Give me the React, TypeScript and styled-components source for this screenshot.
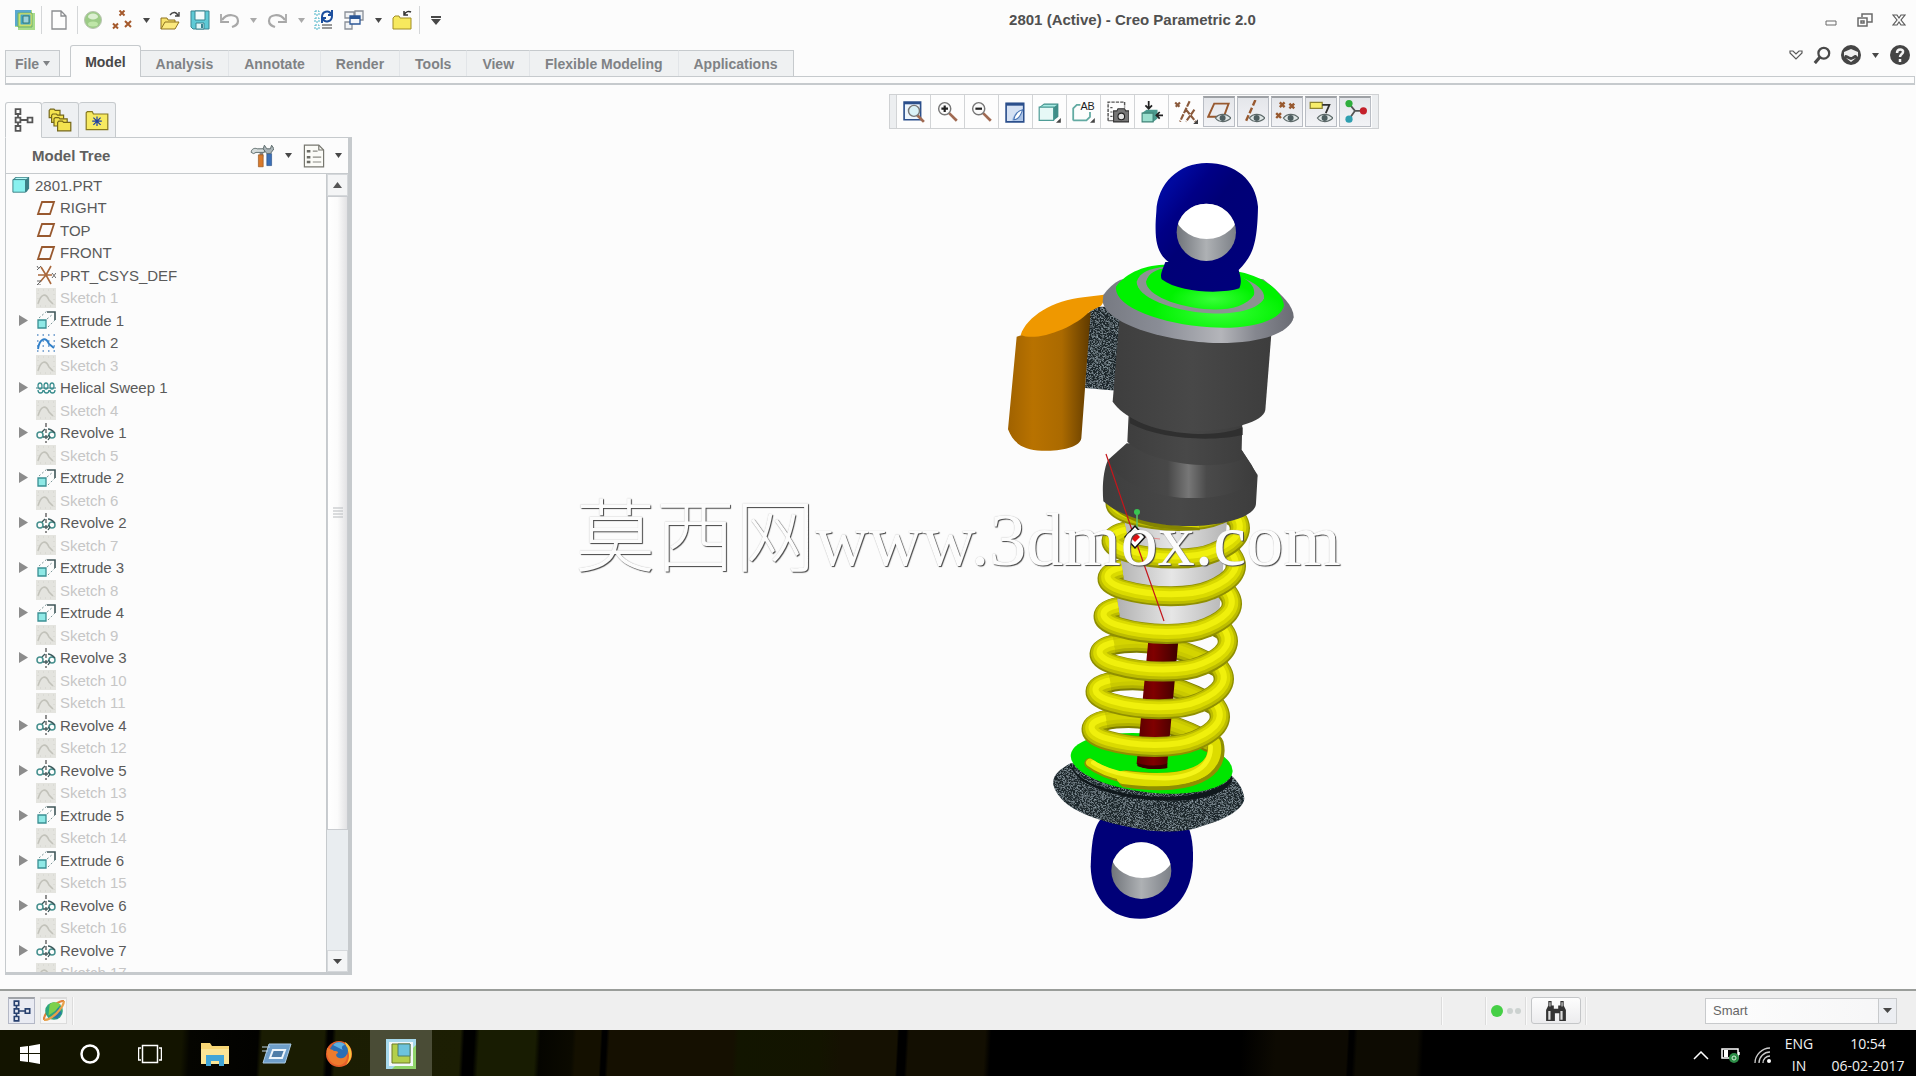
import React from "react";
import styled, { createGlobalStyle, css } from "styled-components";

const line = "#c6cacd";
const sans = '"Liberation Sans", Arial, sans-serif';

const GlobalStyle = createGlobalStyle`
  * { box-sizing: border-box; }
  html, body { margin: 0; padding: 0; }
  body { background: #fcfcfc; font-family: ${sans}; color: #555; }
  button { font: inherit; color: inherit; border: 0; padding: 0; background: none; }
  svg { display: block; flex: none; }
`;

const Shell = styled.div`
  display: flex;
  flex-direction: column;
  height: 100vh;
  overflow: hidden;
  position: relative;
`;

/* ---------- title bar ---------- */
const TitleBar = styled.header`
  display: flex;
  align-items: center;
  height: 40px;
  padding-left: 11px;
`;
const QuickTools = styled.div`
  display: flex;
  align-items: center;
`;
const Slot = styled.button<{ $w: number }>`
  width: ${(p) => p.$w}px;
  height: 30px;
  display: flex;
  align-items: center;
  justify-content: center;
`;
const Rule = styled.span`
  width: 1px;
  height: 28px;
  margin: 0 1px 0 2px;
  background: #d4d6d8;
`;
const Title = styled.h1`
  flex: 1;
  margin: 0;
  text-align: center;
  font-size: 15px;
  line-height: 20px;
  font-weight: bold;
  color: #505050;
`;
const Group = styled.div`
  display: flex;
  align-items: center;
`;

/* ---------- ribbon ---------- */
const RibbonTabs = styled.nav`
  display: flex;
  align-items: flex-end;
  height: 36px;
  padding-left: 5px;
  position: relative;
`;
const Tab = styled.button<{ $active?: boolean }>`
  height: 26px;
  padding: 0 15px;
  font-size: 14px;
  font-weight: bold;
  color: #7f8285;
  background: #eff1f2;
  border-top: 1px solid ${line};
  border-right: 1px solid #e2e5e8;
  white-space: nowrap;
  &:last-child { border-right-color: ${line}; }
  ${(p) =>
    p.$active &&
    css`
      height: 32px;
      padding: 0 14px;
      color: #484848;
      background: #fcfcfc;
      border: 1px solid ${line};
      border-bottom: 0;
      border-radius: 3px 3px 0 0;
      margin-bottom: -1px;
      z-index: 1;
    `}
`;
const FileTab = styled(Tab)`
  display: flex;
  align-items: center;
  gap: 4px;
  padding: 0 9px;
  margin-right: 10px;
  border: 1px solid ${line};
  border-bottom: 0;
`;
const TabList = styled.div`
  display: flex;
  align-items: flex-end;
  flex: 1;
`;
const RibbonTools = styled(Group)`
  align-self: flex-start;
`;
const RibbonStrip = styled.div`
  height: 9px;
  flex: none;
  margin: 0 1px 0 5px;
  border: 1px solid ${line};
  border-bottom-width: 2px;
`;

/* ---------- work area ---------- */
const Work = styled.main`
  flex: 1;
  min-height: 0;
  display: grid;
  grid-template-columns: 352px 1fr;
`;
const Side = styled.aside`
  display: flex;
  flex-direction: column;
  min-height: 0;
  padding: 17px 0 14px 5px;
`;
const SideTabs = styled.div`
  display: flex;
`;
const SideTab = styled.button<{ $active?: boolean }>`
  width: 37px;
  height: 36px;
  display: flex;
  align-items: center;
  justify-content: center;
  border: 1px solid ${line};
  border-left-width: ${(p) => (p.$active ? 1 : 0)}px;
  border-bottom-color: ${(p) => (p.$active ? "#fcfcfc" : line)};
  border-radius: 3px 3px 0 0;
  background: ${(p) => (p.$active ? "#fcfcfc" : "#eef0f2")};
  margin-bottom: -1px;
  z-index: 1;
`;
const Panel = styled.section`
  flex: 1;
  min-height: 0;
  display: flex;
  flex-direction: column;
  border: 1px solid ${line};
  border-right-width: 4px;
  border-bottom-width: 3px;
`;
const PanelHead = styled.div`
  display: flex;
  align-items: center;
  height: 36px;
  flex: none;
  padding-left: 26px;
  border-bottom: 1px solid ${line};
`;
const PanelTitle = styled.h2`
  flex: 1;
  margin: 0;
  font-size: 15px;
  color: #606060;
`;
const PanelBody = styled.div`
  flex: 1;
  min-height: 0;
  display: grid;
  grid-template-columns: 1fr 22px;
`;
const Tree = styled.ul`
  list-style: none;
  margin: 0;
  padding: 0;
  overflow: hidden;
`;
const Row = styled.li<{ $dim?: boolean; $root?: boolean }>`
  display: flex;
  align-items: center;
  gap: ${(p) => (p.$root ? 5 : 4)}px;
  height: 22px;
  padding-left: ${(p) => (p.$root ? 6 : 0)}px;
  font-size: 15px;
  color: ${(p) => (p.$dim ? "#c6c6c6" : "#5a5a5a")};
  white-space: nowrap;
  &:nth-child(even) { height: 23px; }
`;
const Expander = styled.button`
  width: 26px;
  height: 20px;
  display: flex;
  align-items: center;
  justify-content: center;
  padding-left: 8px;
`;
const Indent = styled.span`
  width: 26px;
`;
const ScrollBar = styled.div`
  display: flex;
  flex-direction: column;
  background: #e9edf0;
  border-left: 1px solid ${line};
  min-height: 0;
`;
const ScrollButton = styled.button`
  height: 22px;
  flex: none;
  display: flex;
  align-items: center;
  justify-content: center;
  border: 1px solid #d5d8db;
  background: #f4f5f6;
`;
const Thumb = styled.div`
  flex: 84;
  display: flex;
  align-items: center;
  justify-content: center;
  border: 1px solid #c9ccd0;
  background: linear-gradient(90deg, #fff, #fbfbfb 50%, #e2e2e4);
`;
const TrackRest = styled.div`
  flex: 16;
`;

/* ---------- graphics area ---------- */
const Viewport = styled.section`
  display: flex;
  flex-direction: column;
  align-items: center;
  padding-top: 9px;
  min-width: 0;
  overflow: hidden;
`;
const FloatBar = styled.div`
  display: flex;
  height: 35px;
  flex: none;
  border: 1px solid #cfd1d3;
`;
const Handle = styled.span`
  width: 6px;
  background: #eceef0;
`;
const ViewButton = styled.button<{ $on?: boolean }>`
  width: 34px;
  display: flex;
  align-items: center;
  justify-content: center;
  border-left: 1px solid #d2d4d6;
  background: #fdfdfd;
  ${(p) =>
    p.$on &&
    css`
      margin: 1px;
      width: 32px;
      border: 1px solid #b9bdc4;
      border-top: 2px solid #9ea1a5;
      background: linear-gradient(#e4e6ea, #f2f3f6);
    `}
`;
const ModelArea = styled.div`
  padding-top: 21px;
`;
const Watermark = styled.div`
  position: absolute;
  left: 0;
  right: 0;
  top: 475px;
  display: flex;
  align-items: baseline;
  justify-content: center;
  line-height: 110px;
  color: #fcfcfc;
  text-shadow: 1px 1px 1px #444, 0 0 1px #bbb;
  pointer-events: none;
`;
const Han = styled.span`
  font-family: "Noto Sans CJK SC", sans-serif;
  font-size: 80px;
  font-weight: 300;
`;
const Latin = styled.span`
  font-family: "Liberation Serif", serif;
  font-size: 74px;
`;

/* ---------- status bar ---------- */
const Status = styled.footer`
  display: flex;
  align-items: center;
  height: 41px;
  flex: none;
  padding: 0 19px 0 8px;
  border-top: 2px solid #9a9d9a;
  background: #efefef;
  gap: 5px;
`;
const StatusButton = styled.button<{ $on?: boolean }>`
  width: 27px;
  height: 27px;
  display: flex;
  align-items: center;
  justify-content: center;
  border: 1px solid ${(p) => (p.$on ? "#b4b8c6" : "#dcdcdc")};
  border-top: 2px solid ${(p) => (p.$on ? "#a0a3a8" : "#dcdcdc")};
  background: ${(p) => (p.$on ? "#e9ebf3" : "#f6f6f6")};
`;
const Split = styled.span<{ $after?: number }>`
  width: 2px;
  height: 28px;
  border-left: 1px solid #dcdcdc;
  border-right: 1px solid #fafafa;
  margin-right: ${(p) => p.$after ?? 0}px;
`;
const Grow = styled.span`
  flex: 1;
`;
const StatusTools = styled(Group)`
  gap: 4px;
`;
const FindButton = styled.button`
  width: 50px;
  height: 27px;
  display: flex;
  align-items: center;
  justify-content: center;
  border: 1px solid #c4c6c8;
  border-radius: 3px;
  background: linear-gradient(#fdfdfd, #ececee);
`;
const Picker = styled.label`
  position: relative;
  display: block;
  width: 192px;
  height: 26px;
  margin-left: 113px;
`;
const Select = styled.select`
  appearance: none;
  width: 100%;
  height: 26px;
  padding: 0 26px 0 7px;
  border: 1px solid #c8cacc;
  border-radius: 0;
  background: linear-gradient(90deg, #fdfdfd, #f6f6f7);
  font: 13px ${sans};
  color: #666;
`;
const PickerArrow = styled.span`
  position: absolute;
  top: 1px;
  right: 1px;
  bottom: 1px;
  width: 18px;
  display: flex;
  align-items: center;
  justify-content: center;
  border-left: 1px solid #c8cacc;
  background: #eceef2;
  pointer-events: none;
`;

/* ---------- taskbar ---------- */
const Taskbar = styled.footer`
  display: flex;
  align-items: center;
  height: 46px;
  flex: none;
  color: #f2f2f2;
  background: linear-gradient(
    93deg,
    #131400 0, #131400 182px, #050500 190px, #020200 258px,
    #1a1c02 262px, #1a1c02 324px, #000 328px, #000 332px,
    #1b1d03 336px, #1c1e03 460px, #000 464px, #000 474px,
    #181c02 479px, #181c02 535px, #050500 540px, #0b0a00 572px,
    #141000 576px, #141000 600px, #000 602px, #000 606px,
    #151001 609px, #151001 733px, #121500 738px, #131400 820px,
    #151102 840px, #151102 896px, #000 898px, #000 905px,
    #130f02 908px, #130f02 984px, #000 990px, #000 1240px,
    #0d0a02 1275px, #0d0a02 1346px, #000 1348px, #000 1352px,
    #0d0b02 1356px, #0d0b02 1416px, #000 1422px, #000 100%
  );
`;
const TaskGap = styled.span`
  width: 4px;
`;
const TaskButton = styled.button<{ $active?: boolean; $wide?: boolean }>`
  width: ${(p) => (p.$wide ? 62 : 60)}px;
  height: 46px;
  padding-top: 2px;
  display: flex;
  align-items: center;
  justify-content: center;
  background: ${(p) => (p.$active ? "#4a4c36" : "none")};
`;
const TrayText = styled.div<{ $w: number }>`
  width: ${(p) => p.$w}px;
  padding-top: 4px;
  text-align: center;
  font-family: "Open Sans", sans-serif;
  font-size: 14px;
  line-height: 22px;
`;
const TraySlot = styled.button<{ $w: number }>`
  width: ${(p) => p.$w}px;
  height: 46px;
  padding-top: 4px;
  display: flex;
  align-items: center;
  justify-content: center;
`;

/* ---------- icons ---------- */
const Ico = ({ s = 20, children }: { s?: number; children: React.ReactNode }) => (
  <svg width={s} height={s} viewBox="0 0 20 20" fill="none" aria-hidden="true">
    {children}
  </svg>
);
const Caret = ({ c = "#484848", w = 7 }: { c?: string; w?: number }) => (
  <svg width={w} height={5} viewBox="0 0 8 5" preserveAspectRatio="none" aria-hidden="true">
    <path d="M0 0h8L4 5z" fill={c} />
  </svg>
);
const cross = (x: number, y: number, r: number) =>
  `M${x - r} ${y - r}l${2 * r} ${2 * r}M${x + r} ${y - r}l${-2 * r} ${2 * r}`;

const LogoIcon = () => (
  <Ico>
    <path d="M0 0h17v3h3v17H3v-3H0z" fill="#a9dd8c" />
    <path d="M0 0h16v16H0z" fill="#5aa9cf" />
    <path d="M3 3h14v14H3z" fill="#b6e06c" stroke="#6fae6a" />
    <path d="M5 4h11v11H5z" fill="#3fa6c6" stroke="#e3e06a" />
    <path d="M8 6h6v7H8z" fill="#9bd3dc" stroke="#3b7a75" />
  </Ico>
);
const PageIcon = () => (
  <Ico>
    <path d="M3 1h9l5 5v13H3zM12 1v5h5" fill="#fdfdfd" stroke="#8b8d90" strokeWidth="1.300" />
  </Ico>
);
const BallIcon = () => (
  <Ico>
    <circle cx="10" cy="10" r="8.500" fill="#9ccb86" stroke="#b9c4b2" />
    <ellipse cx="10" cy="6.500" rx="5" ry="3" fill="#dcefd2" />
    <ellipse cx="10" cy="14" rx="5" ry="2.500" fill="#bfe6a8" />
  </Ico>
);
const XxxIcon = () => (
  <Ico>
    <path d={cross(10, 3, 2.5) + cross(3.5, 16, 2.5) + cross(16, 14, 3)} stroke="#a4592c" strokeWidth="2" />
  </Ico>
);
const OpenIcon = () => (
  <Ico>
    <path d="M1 19V8h6l1 2h7v3" fill="#f7e26b" stroke="#8f7320" />
    <path d="M1 19l4-7h14l-4 7z" fill="#fbe97e" stroke="#8f7320" />
    <path d="M10 5c3-4 7-3 8 1M19 2v4h-4" stroke="#444" strokeWidth="1.400" />
  </Ico>
);
const SaveIcon = () => (
  <Ico>
    <path d="M1 1h18v18H3l-2-2z" fill="#5ecad6" stroke="#3a8591" />
    <path d="M5 1h10v9H5z" fill="#f2fbfc" stroke="#3a8591" />
    <path d="M6 13h8v6H6z" fill="#dff5f7" stroke="#3a8591" />
    <path d="M11 14h2v4h-2z" fill="#3a8591" />
  </Ico>
);
const UndoIcon = ({ flip }: { flip?: boolean }) => (
  <Ico>
    <g transform={flip ? "translate(20 0) scale(-1 1)" : undefined}>
      <path d="M2 10c5-7 16-6 16 1 0 4-3 5-6 6" stroke="#a8a8a8" strokeWidth="2.200" />
      <path d="M1 4v8h8" stroke="#a8a8a8" strokeWidth="1.800" />
    </g>
  </Ico>
);
const RegenIcon = () => (
  <Ico>
    <path d="M1 1h4v4H1zM1 8h4v4H1zM1 15h4v4H1z" stroke="#47b2c6" strokeDasharray="2 1" />
    <path d="M8 7c0-6 7-7 9-3M18 0v5h-4M18 6c0 6-7 7-9 3M8 13V8h4" stroke="#1d4f9e" strokeWidth="2" />
    <path d="M8 15h10M8 18h10" stroke="#777" strokeWidth="1.300" />
  </Ico>
);
const WindowsIcon = () => (
  <Ico>
    <path d="M1 2h9v6H1zM11 1h8v9h-8zM1 12h7v7H1z" fill="#f1f3f5" stroke="#8a9098" strokeWidth="1.300" />
    <path d="M6 6h10v8H6z" fill="#f4f7fc" stroke="#2b5797" strokeWidth="1.300" />
    <path d="M6 6h10v3H6z" fill="#2b5797" />
  </Ico>
);
const CloseFolderIcon = () => (
  <Ico>
    <path d="M1 19V8l2-2h4l1 2h11v11z" fill="#f7e95e" stroke="#a08d25" />
    <path d="M12 5c2-4 5-4 7-3M12 1v4h4" stroke="#333" strokeWidth="1.500" />
  </Ico>
);
const StructureIcon = ({ c = "#555", s = 24 }: { c?: string; s?: number }) => (
  <Ico s={s}>
    <path d="M3 1h4v4H3zM3 8h4v4H3zM3 15h4v4H3zM13 8h4v4h-4zM5 5v3M5 12v3M7 10h6" stroke={c} strokeWidth="1.500" />
  </Ico>
);
const FoldersIcon = () => (
  <Ico s={24}>
    <g fill="#f3e24f" stroke="#75671a">
      <path d="M1 8V2l1-1h3l1 1h4v6z" />
      <path d="M3 12V6l1-1h3l1 1h5v6z" />
      <path d="M5 15V9l1-1h3l1 1h6v6z" />
      <path d="M8 19v-7l1-1h3l1 1h6v7z" />
    </g>
  </Ico>
);
const StarFolderIcon = () => (
  <Ico s={24}>
    <path d="M1 18V4l1-1h4l1 2h12v13z" fill="#f6e961" stroke="#87791f" />
    <path d="M10 7v8M6 11h8M7 8l6 6M13 8l-6 6" stroke="#1d3fa3" />
  </Ico>
);
const ToolsIcon = () => (
  <Ico s={24}>
    <path d="M8 7h3v4H8z" fill="#888" />
    <path d="M7 9h4v10H7z" fill="#d97a2b" stroke="#8a4b18" strokeWidth=".5" />
    <path d="M1 7c0-3 3-4 5-3h6v3H5L3 8z" fill="#d5dcdc" stroke="#5c6b6b" strokeWidth=".8" />
    <path d="M14 8h4v10h-4z" fill="#3a6fb7" stroke="#274c80" strokeWidth=".5" />
    <path d="M12 1l2 3h3l1-3 2 3-3 4h-3l-3-4z" fill="#aab4b8" stroke="#5c6b6b" strokeWidth=".8" />
  </Ico>
);
const ListIcon = () => (
  <Ico s={24}>
    <path d="M2 1h12l4 4v14H2z" fill="#fbfbf7" stroke="#77776f" />
    <path d="M9 6h4M9 11h7M9 15h7" stroke="#8a8a84" />
    <path d="M4 5h3v2H4zM4 10h3v2H4zM4 14h3v2H4z" fill="#6c6c66" />
    <path d="M14 1v4h4" stroke="#77776f" />
  </Ico>
);

const PartIcon = () => (
  <Ico s={18}>
    <path d="M1 4l3-3h15v13l-3 4z" fill="#3c7f86" />
    <path d="M2 4l3-2h13l-3 2z" fill="#b9fbf8" />
    <path d="M1 4h14v14H1z" fill="#8af1ef" stroke="#357a80" />
  </Ico>
);
const PlaneIcon = () => (
  <Ico>
    <path d="M6 4h12l-4 12H2z" stroke="#98592f" strokeWidth="1.800" />
  </Ico>
);
const CsysIcon = () => (
  <Ico>
    <path d="M10 10H16M10 10L15 1M10 10L5 2M10 10H2M10 10l-6 7M10 10l5 9" stroke="#a9673a" strokeWidth="1.600" />
    <path d="M16 8l4 5M20 8l-4 5M1 1l2 3M5 1L1 5M1 16h4l-4 4h4" stroke="#666" />
  </Ico>
);
const DimIcon = () => (
  <Ico>
    <path d="M0 0h20v20H0z" fill="#e4e4df" />
    <path d="M2 16c3-11 8-11 11-4l4 4" stroke="#c2c2ba" strokeWidth="1.600" />
    <path d="M2 2h16v16H2z" stroke="#d2d2cc" strokeDasharray="1 4" />
  </Ico>
);
const SketchIcon = () => (
  <Ico>
    <path d="M1 2h18M1 18h18M1 8h18M1 13h18" stroke="#5b8fc6" strokeWidth="1.300" strokeDasharray="1.500 4" />
    <path d="M2 16c2-12 8-12 11-5l5 4" stroke="#2f7fc9" strokeWidth="2" />
  </Ico>
);
const ExtrudeIcon = () => (
  <Ico>
    <path d="M2 10h8v8H2z" fill="#8fe9e6" stroke="#3a8f93" strokeWidth="1.300" />
    <path d="M11 2h8v8" stroke="#3f5658" strokeWidth="1.600" />
    <path d="M3 8l8-7M12 17l7-7M11 9l6-5" stroke="#7d9799" strokeDasharray="2 2" />
  </Ico>
);
const HelixIcon = () => (
  <Ico>
    <path d="M0 10h20" stroke="#3a7a80" strokeDasharray="2 1" />
    <g stroke="#3c8f90" strokeWidth="1.300">
      <ellipse cx="4" cy="8" rx="2" ry="3" />
      <ellipse cx="10" cy="8" rx="2" ry="3" />
      <ellipse cx="16" cy="8" rx="2" ry="3" />
      <path d="M2 12c0 4 5 4 5 0M8 12c0 4 5 4 5 0M14 12c0 4 5 4 5 0" />
    </g>
  </Ico>
);
const RevolveIcon = () => (
  <Ico>
    <path d="M10 0v20" stroke="#555" strokeWidth="1.300" strokeDasharray="4 2" />
    <circle cx="4" cy="12" r="3" stroke="#46908e" strokeWidth="1.500" />
    <circle cx="16" cy="12" r="3" stroke="#46908e" strokeWidth="1.500" />
    <path d="M6 9l3-3M12 6c3 0 5 2 7 4M7 14h5M12 12l2 2-2 3" stroke="#3c5a5c" strokeWidth="1.300" />
  </Ico>
);
const treeIcons = {
  part: PartIcon,
  plane: PlaneIcon,
  csys: CsysIcon,
  dim: DimIcon,
  sketch: SketchIcon,
  extrude: ExtrudeIcon,
  helix: HelixIcon,
  revolve: RevolveIcon,
};

/* view toolbar icons */
const ZoomIcon = ({ sign }: { sign: string }) => (
  <Ico s={22}>
    <path d="M11 11l7 7" stroke="#a06a52" strokeWidth="2.500" />
    <circle cx="7" cy="7" r="5.500" fill="#fbfbfb" stroke="#777" strokeWidth="1.300" />
    <path d={sign} stroke="#222" strokeWidth="2" />
  </Ico>
);
const RefitIcon = () => (
  <Ico s={22}>
    <path d="M1 1h15v16H1z" fill="#eef6fd" stroke="#2b4f8c" strokeWidth="1.500" />
    <path d="M1 2h15" stroke="#2b4f8c" strokeWidth="2" />
    <path d="M13 13l6 6" stroke="#a06a52" strokeWidth="2.500" />
    <circle cx="10" cy="9" r="5" fill="#d9f1f7" stroke="#777" strokeWidth="1.300" />
  </Ico>
);
const RepaintIcon = () => (
  <Ico s={22}>
    <path d="M1 2h16v17H1z" fill="#d6e2f4" stroke="#2b4f8c" strokeWidth="1.500" />
    <path d="M1 3h16" stroke="#2b4f8c" strokeWidth="2.500" />
    <path d="M16 8c-5 1-8 4-10 10h10z" fill="#a9c2e6" />
    <path d="M16 8c-4 1-7 4-8 9 4 0 6-3 8-9z" fill="#fff" stroke="#4b76b5" />
  </Ico>
);
const ShadeIcon = () => (
  <Ico s={24}>
    <path d="M1 6l4-3h12v11l-4 3z" fill="#3f8d88" />
    <path d="M2 6l3-2h11l-3 2z" fill="#a9ece4" />
    <path d="M1 6h12v11H1z" fill="#e6f8f6" stroke="#4e9c96" />
    <path d="M19 15v4h-4z" fill="#444" />
  </Ico>
);
const NamedViewIcon = () => (
  <Ico s={24}>
    <path d="M1 17V7l3-3h3M1 17h11l3-3v-4" stroke="#62aaa2" strokeWidth="1.500" />
    <text x="7" y="8" fontFamily="Liberation Sans" fontSize="9" fill="#222">AB</text>
    <path d="M19 15v4h-4z" fill="#444" />
  </Ico>
);
const CameraIcon = () => (
  <Ico s={22}>
    <path d="M1 18V1h15v5" stroke="#555" strokeWidth="1.300" strokeDasharray="3 1" />
    <path d="M1 18h5M3 6h2M3 10h2M3 14h2" stroke="#555" />
    <path d="M6 9h3l1-2h6l1 2h3v10H6z" fill="#777" stroke="#333" />
    <circle cx="13" cy="14" r="3" fill="#e4e4e4" stroke="#222" />
  </Ico>
);
const ViewMgrIcon = () => (
  <Ico s={22}>
    <path d="M1 11l4-3h10v8l-4 3z" fill="#4a9a8e" />
    <path d="M1 11h10v8H1z" fill="#9adfce" stroke="#3f8377" />
    <path d="M7 0v7M4 4l3 3 3-3M20 13h-6M17 10l-3 3 3 3" stroke="#222" strokeWidth="1.600" />
  </Ico>
);
const DatumIcon = () => (
  <Ico s={24}>
    <path d={cross(3, 4, 2) + "M13 1l-8 17M10 8l8 10M17 8l-7 10"} stroke="#8a5a3c" strokeWidth="1.800" strokeDasharray="5 1" />
    <path d="M20 16v4h-4z" fill="#444" />
  </Ico>
);
const Eye = () => (
  <g>
    <path d="M7 15c3-4 9-4 13 0-4 4-10 4-13 0z" fill="#dfe6e6" stroke="#5c6868" />
    <circle cx="13" cy="15" r="2.500" fill="#4e5e60" />
  </g>
);
const PlaneShow = () => (
  <Ico s={24}>
    <path d="M6 3h12l-4 11H1z" stroke="#98592f" strokeWidth="1.600" />
    <Eye />
  </Ico>
);
const AxisShow = () => (
  <Ico s={24}>
    <path d="M12 0L4 18" stroke="#98592f" strokeWidth="2" strokeDasharray="5 2" />
    <Eye />
  </Ico>
);
const PointShow = () => (
  <Ico s={24}>
    <path d={cross(6, 4, 2) + cross(14, 5, 2) + cross(3, 13, 2)} stroke="#98592f" strokeWidth="2" />
    <Eye />
  </Ico>
);
const NoteShow = () => (
  <Ico s={24}>
    <path d="M1 2h10v5H1z" fill="#f7ed6a" stroke="#8d8430" />
    <path d="M11 4h6l-3 7M12 4l5 0" stroke="#333" strokeWidth="1.500" />
    <Eye />
  </Ico>
);
const SpinIcon = () => (
  <Ico s={24}>
    <path d="M5 3l5 6h7M10 9l-5 7" stroke="#555" strokeWidth="1.500" />
    <circle cx="5" cy="3" r="3" fill="#2fae3c" />
    <circle cx="5" cy="16" r="3" fill="#2f9fb0" />
    <circle cx="17" cy="9" r="3" fill="#c4202a" />
  </Ico>
);

/* ---------- tree data ---------- */
type Kind = keyof typeof treeIcons;
const tree: [Kind, string][] = [
  ["part", "2801.PRT"],
  ["plane", "RIGHT"],
  ["plane", "TOP"],
  ["plane", "FRONT"],
  ["csys", "PRT_CSYS_DEF"],
  ["dim", "Sketch 1"],
  ["extrude", "Extrude 1"],
  ["sketch", "Sketch 2"],
  ["dim", "Sketch 3"],
  ["helix", "Helical Sweep 1"],
  ["dim", "Sketch 4"],
  ["revolve", "Revolve 1"],
  ["dim", "Sketch 5"],
  ["extrude", "Extrude 2"],
  ["dim", "Sketch 6"],
  ["revolve", "Revolve 2"],
  ["dim", "Sketch 7"],
  ["extrude", "Extrude 3"],
  ["dim", "Sketch 8"],
  ["extrude", "Extrude 4"],
  ["dim", "Sketch 9"],
  ["revolve", "Revolve 3"],
  ["dim", "Sketch 10"],
  ["dim", "Sketch 11"],
  ["revolve", "Revolve 4"],
  ["dim", "Sketch 12"],
  ["revolve", "Revolve 5"],
  ["dim", "Sketch 13"],
  ["extrude", "Extrude 5"],
  ["dim", "Sketch 14"],
  ["extrude", "Extrude 6"],
  ["dim", "Sketch 15"],
  ["revolve", "Revolve 6"],
  ["dim", "Sketch 16"],
  ["revolve", "Revolve 7"],
  ["dim", "Sketch 17"],
];
const expandable: Kind[] = ["extrude", "helix", "revolve"];
const ribbon = ["Model", "Analysis", "Annotate", "Render", "Tools", "View", "Flexible Modeling", "Applications"];

const viewButtons: { name: string; icon: React.ReactNode; on?: boolean }[] = [
  { name: "Refit", icon: <RefitIcon /> },
  { name: "Zoom in", icon: <ZoomIcon sign="M4 7h6M7 4v6" /> },
  { name: "Zoom out", icon: <ZoomIcon sign="M4 7h6" /> },
  { name: "Repaint", icon: <RepaintIcon /> },
  { name: "Display style", icon: <ShadeIcon /> },
  { name: "Saved orientations", icon: <NamedViewIcon /> },
  { name: "Scenes", icon: <CameraIcon /> },
  { name: "View manager", icon: <ViewMgrIcon /> },
  { name: "Datum display", icon: <DatumIcon /> },
  { name: "Planes", icon: <PlaneShow />, on: true },
  { name: "Axes", icon: <AxisShow />, on: true },
  { name: "Points", icon: <PointShow />, on: true },
  { name: "Annotations", icon: <NoteShow />, on: true },
  { name: "Spin center", icon: <SpinIcon />, on: true },
];

/* ---------- shock absorber drawing ---------- */
const Tube = ({ d, dark }: { d: string; dark?: boolean }) => (
  <g fill="none" strokeLinecap={dark ? "round" : "butt"}>
    <path d={d} stroke={dark ? "#7c7c00" : "#8f8f00"} strokeWidth="60" />
    <path d={d} stroke={dark ? "#b0b000" : "#bcbc00"} strokeWidth="52" transform="translate(0 -2)" />
    <path d={d} stroke={dark ? "#c9c900" : "#dada00"} strokeWidth="38" transform="translate(0 -4)" />
    <path d={d} stroke={dark ? "#d4d400" : "#f0f00c"} strokeWidth="18" transform="translate(0 -6)" />
  </g>
);
const frontTurn = "M222 494C168 504 158 536 228 556C310 580 430 582 488 556C560 526 584 488 545 444";
const backTurn = "M530 560C460 520 370 488 290 488C260 488 240 490 215 496";
const turns = [-2, -1, 0, 1, 2, 3, 4];
const place = (k: number) => `translate(${k * 12} ${k * -113})`;

const ShockModel = () => (
  <svg width="320" height="772" viewBox="974 150 320 772" role="img" aria-label="Shock absorber model">
    <defs>
      <linearGradient id="gOrange">
        <stop offset="0" stopColor="#a06200" />
        <stop offset=".3" stopColor="#b87200" />
        <stop offset=".65" stopColor="#ab6a00" />
        <stop offset="1" stopColor="#5f3a00" />
      </linearGradient>
      <linearGradient id="gBore">
        <stop offset="0" stopColor="#70747a" />
        <stop offset=".5" stopColor="#aeb1b4" />
        <stop offset="1" stopColor="#7c8087" />
      </linearGradient>
      <linearGradient id="gRim">
        <stop offset="0" stopColor="#777a82" />
        <stop offset=".3" stopColor="#8a8d96" />
        <stop offset=".62" stopColor="#b4b5ba" />
        <stop offset=".8" stopColor="#85878f" />
        <stop offset="1" stopColor="#6a6c74" />
      </linearGradient>
      <linearGradient id="gCyl">
        <stop offset="0" stopColor="#b0b0b0" />
        <stop offset=".5" stopColor="#e6e6e6" />
        <stop offset="1" stopColor="#b4b4b4" />
      </linearGradient>
      <linearGradient id="gRod">
        <stop offset="0" stopColor="#5a0000" />
        <stop offset=".4" stopColor="#800000" />
        <stop offset="1" stopColor="#3c0000" />
      </linearGradient>
      <linearGradient id="gBody">
        <stop offset="0" stopColor="#3e3e3e" />
        <stop offset=".5" stopColor="#484848" />
        <stop offset="1" stopColor="#3d3d3d" />
      </linearGradient>
      <linearGradient id="gFlare">
        <stop offset="0" stopColor="#3c3c3c" />
        <stop offset=".4" stopColor="#484848" />
        <stop offset=".54" stopColor="#777" />
        <stop offset=".66" stopColor="#4a4a4a" />
        <stop offset="1" stopColor="#3b3b3b" />
      </linearGradient>
      <linearGradient id="gEye" x1="0" y1="0" x2="1" y2="1">
        <stop offset="0" stopColor="#000080" />
        <stop offset=".15" stopColor="#0009a0" />
        <stop offset=".3" stopColor="#000086" />
        <stop offset=".45" stopColor="#000076" />
        <stop offset="1" stopColor="#00007c" />
      </linearGradient>
      <radialGradient id="gGreen" cx=".62" cy=".75" r=".4">
        <stop offset="0" stopColor="#38ff38" />
        <stop offset="1" stopColor="#00f200" />
      </radialGradient>
      <filter id="knurl" x="0" y="0" width="1" height="1">
        <feTurbulence type="fractalNoise" baseFrequency=".2 .45" numOctaves="2" seed="4" />
        <feColorMatrix values="0 0 0 0 .4  0 0 0 0 .5  0 0 0 0 .56  1.800 0 0 0 -.8" />
        <feComposite in2="SourceGraphic" operator="in" result="n" />
        <feMerge>
          <feMergeNode in="SourceGraphic" />
          <feMergeNode in="n" />
        </feMerge>
      </filter>
      <clipPath id="boreTop"><ellipse cx="679" cy="277" rx="89" ry="86" /></clipPath>
      <clipPath id="boreLow"><ellipse cx="304" cy="1172" rx="90" ry="85" /></clipPath>
    </defs>

    <g transform="translate(1040 480) scale(.33333)">
      <path d="M188 1010C160 1040 155 1080 152 1160C155 1260 215 1316 300 1316C395 1314 450 1250 458 1160C462 1100 455 1060 440 1030z" fill="#000078" />
      <ellipse cx="304" cy="1172" rx="90" ry="85" fill="url(#gBore)" />
      <ellipse cx="307" cy="1112" rx="98" ry="82" fill="#fff" clipPath="url(#boreLow)" />
      <path d="M92 850C60 868 36 885 40 915C60 990 180 1030 330 1052C400 1058 450 1052 480 1040C560 1020 612 985 613 955C610 925 590 900 572 885z" fill="#1a262c" filter="url(#knurl)" />
      <path d="M94 850C100 900 200 940 340 950C440 956 560 930 576 885L576 905C540 958 430 968 330 960C200 948 95 908 92 850z" fill="#10181c" />
      <ellipse cx="335" cy="850" rx="244" ry="88" transform="rotate(6 335 850)" fill="#00e600" />
      {turns.map((k) => (
        <g key={k} transform={place(k)}><Tube d={backTurn} dark /></g>
      ))}
      <path d="M326 470L416 470L382 850C375 872 300 872 290 850z" fill="url(#gRod)" />
      <path d="M292 848c20 10 70 12 90 2v14c-20 6-70 4-90-6z" fill="#3a0000" />
      <path d="M250 110H562L536 420C480 442 290 442 228 418z" fill="url(#gCyl)" />
      <g fill="none" strokeLinecap="round">
        <path d="M148 850C200 890 300 912 400 906C500 898 535 860 528 800" stroke="#8f8f00" strokeWidth="30" />
        <path d="M260 897C460 925 545 870 525 790" stroke="#8f8f00" strokeWidth="52" />
        <path d="M150 848C200 886 300 908 400 902C500 894 533 856 524 796" stroke="#dede00" strokeWidth="24" />
        <path d="M250 892C450 918 538 868 522 790" stroke="#dcdc00" strokeWidth="40" />
        <path d="M160 848C210 882 300 896 390 894C480 886 512 850 512 800" stroke="#f5f518" strokeWidth="14" />
      </g>
      {turns.map((k) => (
        <g key={k} transform={place(k)}><Tube d={frontTurn} /></g>
      ))}
      <path d="M225 60C300 130 400 125 480 128" fill="none" stroke="#858500" strokeWidth="46" />
      <path d="M218 50C300 122 400 118 480 126" fill="none" stroke="#d8d800" strokeWidth="34" />
    </g>

    <g transform="translate(980 140) scale(.33333)">
      <path d="M440 940L384 960C370 990 366 1040 370 1084C410 1120 480 1145 560 1155C660 1165 740 1150 790 1130C815 1118 828 1105 828 1090L833 1005L785 930z" fill="url(#gBody)" />
      <path d="M440 910L384 960C400 1010 480 1060 600 1073C700 1080 790 1060 832 1010L815 975L785 930z" fill="url(#gFlare)" />
      <path d="M447 800L442 905C500 965 700 1000 795 955L785 930L788 800z" fill="url(#gBody)" />
      <path d="M450 830C520 880 700 900 788 862L788 885C700 905 540 900 450 850z" fill="#2f2f2f" />
      <path d="M330 500L425 500L412 752L315 744z" fill="#1a262c" filter="url(#knurl)" />
      <path d="M418 540L398 785C430 830 500 870 640 874C760 872 850 845 856 810L875 570z" fill="url(#gBody)" />
      <path d="M110 590L84 868C100 910 130 930 185 932C250 935 300 920 304 895L332 515z" fill="url(#gOrange)" />
      <path d="M122 585C140 530 220 480 310 472L372 464C374 480 368 492 362 498L328 515C280 565 170 606 122 585z" fill="#ef9800" />
      <path d="M370 465C385 445 400 430 420 420L560 380L850 418C890 450 943 495 941 532C930 580 840 612 700 609C540 600 380 550 368 485z" fill="url(#gRim)" />
      <path d="M408 440C440 395 500 374 560 374L780 396C850 410 905 450 912 495C905 545 800 570 690 562C540 552 400 500 408 440z" fill="url(#gGreen)" />
      <path d="M470 425C480 395 510 384 560 380L780 410C830 430 855 450 852 475C835 510 760 524 690 520C570 512 470 470 470 425z" fill="#8c9392" />
      <path d="M498 425C505 400 530 386 560 384L780 408C815 425 826 445 822 465C800 500 740 512 690 508C590 502 500 465 498 425z" fill="url(#gGreen)" />
      <path d="M556 366C545 395 540 405 545 418C600 460 730 462 778 445C786 425 782 410 776 390C815 350 832 320 834 200C828 120 765 69 680 69C597 69 532 130 529 215C522 300 530 340 566 366z" fill="url(#gEye)" />
      <ellipse cx="679" cy="277" rx="89" ry="86" fill="url(#gBore)" />
      <ellipse cx="680" cy="206" rx="100" ry="91" fill="#fff" clipPath="url(#boreTop)" />
    </g>

    <g>
      <path d="M1106 454L1134 536L1164 621" fill="none" stroke="#c4161c" strokeWidth="1.200" />
      <path d="M1137 512v24" stroke="#5fc467" strokeWidth="1.500" />
      <circle cx="1137" cy="512" r="3" fill="#39c552" />
      <path d="M1135 536l25 3" stroke="#e58c8c" />
      <path d="M1135 526l10 11-10 11-10-11z" fill="#fff" stroke="#111" strokeWidth="1.500" />
      <path d="M1135 532l5 5-5 5-5-5z" fill="#e00f12" />
    </g>
  </svg>
);

const quickItems: [string, number, React.ReactNode][] = [
  ["Application", 28, <LogoIcon />],
  ["|", 4, null],
  ["New", 32, <PageIcon />],
  ["|", 4, null],
  ["Status", 28, <BallIcon />],
  ["Datum points", 30, <XxxIcon />],
  ["Datum menu", 18, <Caret />],
  ["Open", 30, <OpenIcon />],
  ["Save", 30, <SaveIcon />],
  ["Undo", 30, <UndoIcon />],
  ["Undo list", 16, <Caret c="#aaa" />],
  ["Redo", 32, <UndoIcon flip />],
  ["Redo list", 16, <Caret c="#aaa" />],
  ["Regenerate", 30, <RegenIcon />],
  ["Windows", 30, <WindowsIcon />],
  ["Windows menu", 18, <Caret />],
  ["Close", 30, <CloseFolderIcon />],
  ["|", 4, null],
];

export default function App() {
  return (
    <Shell>
      <GlobalStyle />
      <TitleBar>
        <QuickTools>
          {quickItems.map(([name, w, icon], i) =>
            name === "|" ? (
              <Rule key={i} />
            ) : (
              <Slot key={i} $w={w} aria-label={name}>{icon}</Slot>
            )
          )}
          <Slot $w={30} aria-label="Customize">
            <svg width="10" height="9" viewBox="0 0 10 9" aria-hidden="true">
              <path d="M0 0h10v2H0zM0 3h10L5 9z" fill="#484848" />
            </svg>
          </Slot>
        </QuickTools>
        <Title>2801 (Active) - Creo Parametric 2.0</Title>
        <Group>
          <Slot $w={34} aria-label="Minimize">
            <svg width="12" height="14"><path d="M1 8h10v4H1z" fill="none" stroke="#6a6a6a" /></svg>
          </Slot>
          <Slot $w={34} aria-label="Restore">
            <svg width="16" height="14" viewBox="0 0 16 14">
              <path d="M5 4V1h10v8h-5M1 5h9v8H1zM4 8h3v2H4z" fill="none" stroke="#6a6a6a" strokeWidth="1.500" />
            </svg>
          </Slot>
          <Slot $w={34} aria-label="Close window">
            <svg width="14" height="12" viewBox="0 0 14 12">
              <path d="M1 1h4l2 3 2-3h4L9 6l4 5H9L7 8l-2 3H1l4-5z" fill="none" stroke="#5a5a5a" strokeWidth="1.200" />
            </svg>
          </Slot>
        </Group>
      </TitleBar>

      <RibbonTabs>
        <FileTab>File<Caret c="#7f8285" w={7} /></FileTab>
        <TabList>
          {ribbon.map((name) => (
            <Tab key={name} $active={name === "Model"}>{name}</Tab>
          ))}
        </TabList>
        <RibbonTools>
          <Slot $w={26} aria-label="Collapse ribbon">
            <svg width="14" height="10" viewBox="0 0 14 10">
              <path d="M1 1h3l3 3 3-3h3v2L7 9 1 3z" fill="none" stroke="#5a5a5a" strokeWidth="1.200" />
            </svg>
          </Slot>
          <Slot $w={26} aria-label="Search">
            <Ico s={18}>
              <circle cx="12" cy="8" r="6" stroke="#4a4a4a" strokeWidth="2.500" />
              <path d="M8 12l-6 7" stroke="#4a4a4a" strokeWidth="3.500" />
            </Ico>
          </Slot>
          <Slot $w={32} aria-label="Learning">
            <Ico s={20}>
              <circle cx="10" cy="10" r="10" fill="#454545" />
              <path d="M3 7l7-3 7 3v5l-2-2c-3 0-3 2-5 2s-3-2-6-2l-1 2z" fill="#f0f0f0" />
              <path d="M5 13l5 2 5-2-5 4z" fill="#f0f0f0" />
            </Ico>
          </Slot>
          <Slot $w={16} aria-label="Learning menu"><Caret /></Slot>
          <Slot $w={33} aria-label="Help">
            <Ico s={20}>
              <circle cx="10" cy="10" r="10" fill="#454545" />
              <path d="M7 8c0-5 7-4 6-1 0 2-3 2-3 5M10 14v3" stroke="#f4f4f4" strokeWidth="2.500" />
            </Ico>
          </Slot>
        </RibbonTools>
      </RibbonTabs>
      <RibbonStrip />

      <Work>
        <Side>
          <SideTabs>
            <SideTab $active aria-label="Model Tree"><StructureIcon /></SideTab>
            <SideTab aria-label="Folder Browser"><FoldersIcon /></SideTab>
            <SideTab aria-label="Favorites"><StarFolderIcon /></SideTab>
          </SideTabs>
          <Panel>
            <PanelHead>
              <PanelTitle>Model Tree</PanelTitle>
              <Slot $w={28} aria-label="Settings"><ToolsIcon /></Slot>
              <Slot $w={24} aria-label="Settings menu"><Caret /></Slot>
              <Slot $w={28} aria-label="Show"><ListIcon /></Slot>
              <Slot $w={20} aria-label="Show menu"><Caret /></Slot>
            </PanelHead>
            <PanelBody>
              <Tree>
                {tree.map(([kind, name]) => {
                  const Icon = treeIcons[kind];
                  return (
                    <Row key={name} $dim={kind === "dim"} $root={kind === "part"}>
                      {expandable.includes(kind) ? (
                        <Expander aria-label={`Expand ${name}`}>
                          <svg width="9" height="11"><path d="M0 0l9 5.500L0 11z" fill="#8c8c8c" /></svg>
                        </Expander>
                      ) : (
                        kind !== "part" && <Indent />
                      )}
                      <Icon />
                      {name}
                    </Row>
                  );
                })}
              </Tree>
              <ScrollBar>
                <ScrollButton aria-label="Scroll up">
                  <svg width="9" height="6"><path d="M0 6h9L4.500 0z" fill="#555" /></svg>
                </ScrollButton>
                <Thumb>
                  <svg width="10" height="12"><path d="M0 1h10M0 4h10M0 7h10M0 10h10" stroke="#b8bbbe" /></svg>
                </Thumb>
                <TrackRest />
                <ScrollButton aria-label="Scroll down"><Caret w={9} /></ScrollButton>
              </ScrollBar>
            </PanelBody>
          </Panel>
        </Side>

        <Viewport>
          <FloatBar>
            <Handle />
            {viewButtons.map((b) => (
              <ViewButton key={b.name} $on={b.on} aria-label={b.name}>{b.icon}</ViewButton>
            ))}
            <Handle />
          </FloatBar>
          <ModelArea>
            <ShockModel />
          </ModelArea>
        </Viewport>
      </Work>
      <Watermark>
        <Han lang="zh">莫西网</Han>
        <Latin>www.3dmox.com</Latin>
      </Watermark>

      <Status>
        <StatusButton $on aria-label="Toggle navigator"><StructureIcon c="#27406e" s={22} /></StatusButton>
        <StatusButton aria-label="Toggle browser">
          <Ico s={22}>
            <path d="M1 18C0 12 14 0 19 1" stroke="#e0813a" strokeWidth="2" />
            <circle cx="10" cy="10" r="8" fill="#2fa67d" />
            <path d="M6 4c3-3 7-2 10 0l-5 6-6 4z" fill="#7ed04c" />
            <path d="M8 16l6-9 3 5-4 5z" fill="#2977a8" />
            <path d="M1 18c6 1 18-11 18-17" stroke="#e8a04a" strokeWidth="2" />
          </Ico>
        </StatusButton>
        <Split />
        <Grow />
        <Split $after={37} />
        <StatusTools>
          <Split />
          <svg width="30" height="14" role="img" aria-label="Regeneration status">
            <circle cx="6" cy="7" r="6" fill="#45cf45" />
            <circle cx="19" cy="7" r="3" fill="#ccd2d0" />
            <circle cx="27" cy="7" r="3" fill="#ccd2d0" />
          </svg>
          <Split />
          <FindButton aria-label="Find">
            <Ico s={22}>
              <path d="M3 1h3v4h2v3h4V5h2V1h3v4l2 4v10h-6v-7H9v7H1V9l2-4z" fill="#333" />
              <path d="M3 10h2v8H3zM14 10h2v8h-2zM4 2h1v4H4zM15 2h1v4h-1z" fill="#ddd" />
            </Ico>
          </FindButton>
          <Split />
        </StatusTools>
        <Picker>
          <Select aria-label="Selection filter" defaultValue="Smart">
            <option>Smart</option>
          </Select>
          <PickerArrow><Caret w={9} /></PickerArrow>
        </Picker>
      </Status>

      <Taskbar>
        <TaskButton aria-label="Start">
          <Ico><path d="M0 3l8-1v7H0zM9 2l11-2v9H9zM0 10h8v8l-8-1zM9 10h11v10L9 18z" fill="#fff" /></Ico>
        </TaskButton>
        <TaskButton aria-label="Search">
          <Ico><circle cx="10" cy="10" r="8.500" stroke="#fff" strokeWidth="2.500" /></Ico>
        </TaskButton>
        <TaskButton aria-label="Task view">
          <svg width="24" height="20" fill="none"><path d="M4.500 1.500h15v17h-15zM3 4H.5v12H3M21 4h2.500v12H21" stroke="#fff" strokeWidth="1.500" /></svg>
        </TaskButton>
        <TaskGap />
        <TaskButton $wide aria-label="File Explorer">
          <svg width="28" height="24" viewBox="0 0 28 24">
            <path d="M0 1h9l2 3h17v18H0z" fill="#f8d775" />
            <path d="M0 7h28v15H0z" fill="#fbe596" />
            <path d="M5 24V13h18v11h-5v-5h-8v5z" fill="#41a5d8" />
          </svg>
        </TaskButton>
        <TaskButton $wide aria-label="Remote app">
          <svg width="30" height="22" viewBox="0 0 30 22">
            <path d="M7 1h22l-6 19H1z" fill="#6f9fca" stroke="#a9c9e3" />
            <path d="M11 7h12l-3 8H8z" fill="#4f7da8" stroke="#eef5fb" strokeWidth="2" />
            <path d="M0 4h8M0 8h6" stroke="#bdd4e8" />
          </svg>
        </TaskButton>
        <TaskButton $wide aria-label="Firefox">
          <svg width="28" height="28" viewBox="0 0 28 28">
            <circle cx="14" cy="14" r="13" fill="#e8602a" />
            <path d="M20 2c8 5 9 17 1 23 4-6 4-12 0-18z" fill="#f9c23c" />
            <circle cx="14" cy="11" r="9" fill="#2a6fb5" />
            <path d="M8 5c4-4 10-3 12 0-3 0-4 3-2 5z" fill="#5fb0e0" />
            <path d="M2 8c2 1 5 1 7 3 2 0 4 0 4 2-3 1-2 4 1 5 4 1 7-1 8-4 1 8-5 12-10 11C5 24 1 16 2 8z" fill="#ee7b2d" />
          </svg>
        </TaskButton>
        <TaskButton $wide $active aria-label="Creo Parametric">
          <svg width="30" height="30" viewBox="0 0 30 30">
            <path d="M0 0h30v30H0z" fill="#a6d8ec" />
            <path d="M30 6v24H6z" fill="#8fd36a" />
            <path d="M3 3h24v24H3z" fill="#f4f8fa" />
            <path d="M6 5h18v19H6z" fill="#b3cf4a" stroke="#6d7a28" />
            <path d="M12 5h12v12H12z" fill="#6cc3dc" stroke="#4f7f6a" />
          </svg>
        </TaskButton>
        <Grow />
        <TraySlot $w={30} aria-label="Hidden icons">
          <svg width="16" height="9" fill="none"><path d="M1 8l7-7 7 7" stroke="#fff" strokeWidth="1.500" /></svg>
        </TraySlot>
        <TraySlot $w={30} aria-label="Battery">
          <svg width="20" height="18" fill="none">
            <path d="M1 3h16v9H1zM18 6v3" stroke="#fff" strokeWidth="1.500" />
            <path d="M3 4h4v7H3z" fill="#fff" />
            <circle cx="13" cy="12" r="5" fill="#2c8c46" />
            <circle cx="13" cy="12" r="2" stroke="#d4f0d8" />
          </svg>
        </TraySlot>
        <TraySlot $w={32} aria-label="Network">
          <svg width="17" height="17" fill="none">
            <path d="M1 16C1 8 8 1 16 1M5 16c0-6 5-11 11-11M9 16c0-4 3-7 7-7" stroke="#ccc" strokeWidth="1.300" />
            <circle cx="15" cy="14" r="2" fill="#fff" />
          </svg>
        </TraySlot>
        <TrayText $w={42}>ENG<br />IN</TrayText>
        <TrayText $w={96}>10:54<br />06-02-2017</TrayText>
      </Taskbar>
    </Shell>
  );
}
